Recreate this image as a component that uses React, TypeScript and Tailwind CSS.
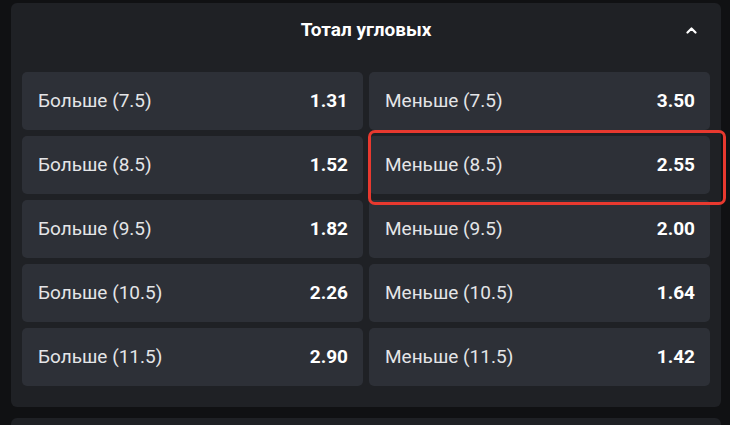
import React from "react";

const rows: [string, string, string, string][] = [
  ["Больше (7.5)", "1.31", "Меньше (7.5)", "3.50"],
  ["Больше (8.5)", "1.52", "Меньше (8.5)", "2.55"],
  ["Больше (9.5)", "1.82", "Меньше (9.5)", "2.00"],
  ["Больше (10.5)", "2.26", "Меньше (10.5)", "1.64"],
  ["Больше (11.5)", "2.90", "Меньше (11.5)", "1.42"],
];

function Cell({ label, odd, highlight }: { label: string; odd: string; highlight?: boolean }) {
  return (
    <div className="relative h-[58px] rounded-[5px] bg-[#2d3037] flex items-center justify-between pl-[16px] pr-[15px]">
      <span className="text-[19px] text-[#e4e5e7]">{label}</span>
      <span className="text-[19px] font-bold text-white">{odd}</span>
      {highlight && (
        <div className="absolute z-10 left-[-1px] top-[-6px] right-[-16px] bottom-[-11px] rounded-[7px] border-[3px] border-[#e8392f]" />
      )}
    </div>
  );
}

export default function App() {
  return (
    <div
      className="w-[730px] h-[425px] bg-[#101113] overflow-hidden pt-[3px] pl-[11px] pr-[9px]"
      style={{ fontFamily: "Roboto, 'Noto Sans', sans-serif" }}
    >
      <div className="rounded-[6px] bg-[#1f2125] pb-[21px]">
        <div className="relative h-[69px] flex items-center justify-center pb-[14px]">
          <span className="text-[19px] font-bold text-white">Тотал угловых</span>
          <svg className="absolute right-[24px] top-[23px]" width="11" height="8" viewBox="0 0 11 8">
            <path d="M1.5 6.5 L5.5 2.5 L9.5 6.5" fill="none" stroke="white" strokeWidth="2.2" strokeLinecap="round" strokeLinejoin="round" />
          </svg>
        </div>
        <div className="grid grid-cols-2 gap-x-[6px] gap-y-[6px] px-[11px]">
          {rows.map((r, i) => (
            <React.Fragment key={i}>
              <Cell label={r[0]} odd={r[1]} />
              <Cell label={r[2]} odd={r[3]} highlight={i === 1} />
            </React.Fragment>
          ))}
        </div>
      </div>
      <div className="mt-[11px] h-[20px] rounded-t-[6px] bg-[#1f2125]" />
    </div>
  );
}
